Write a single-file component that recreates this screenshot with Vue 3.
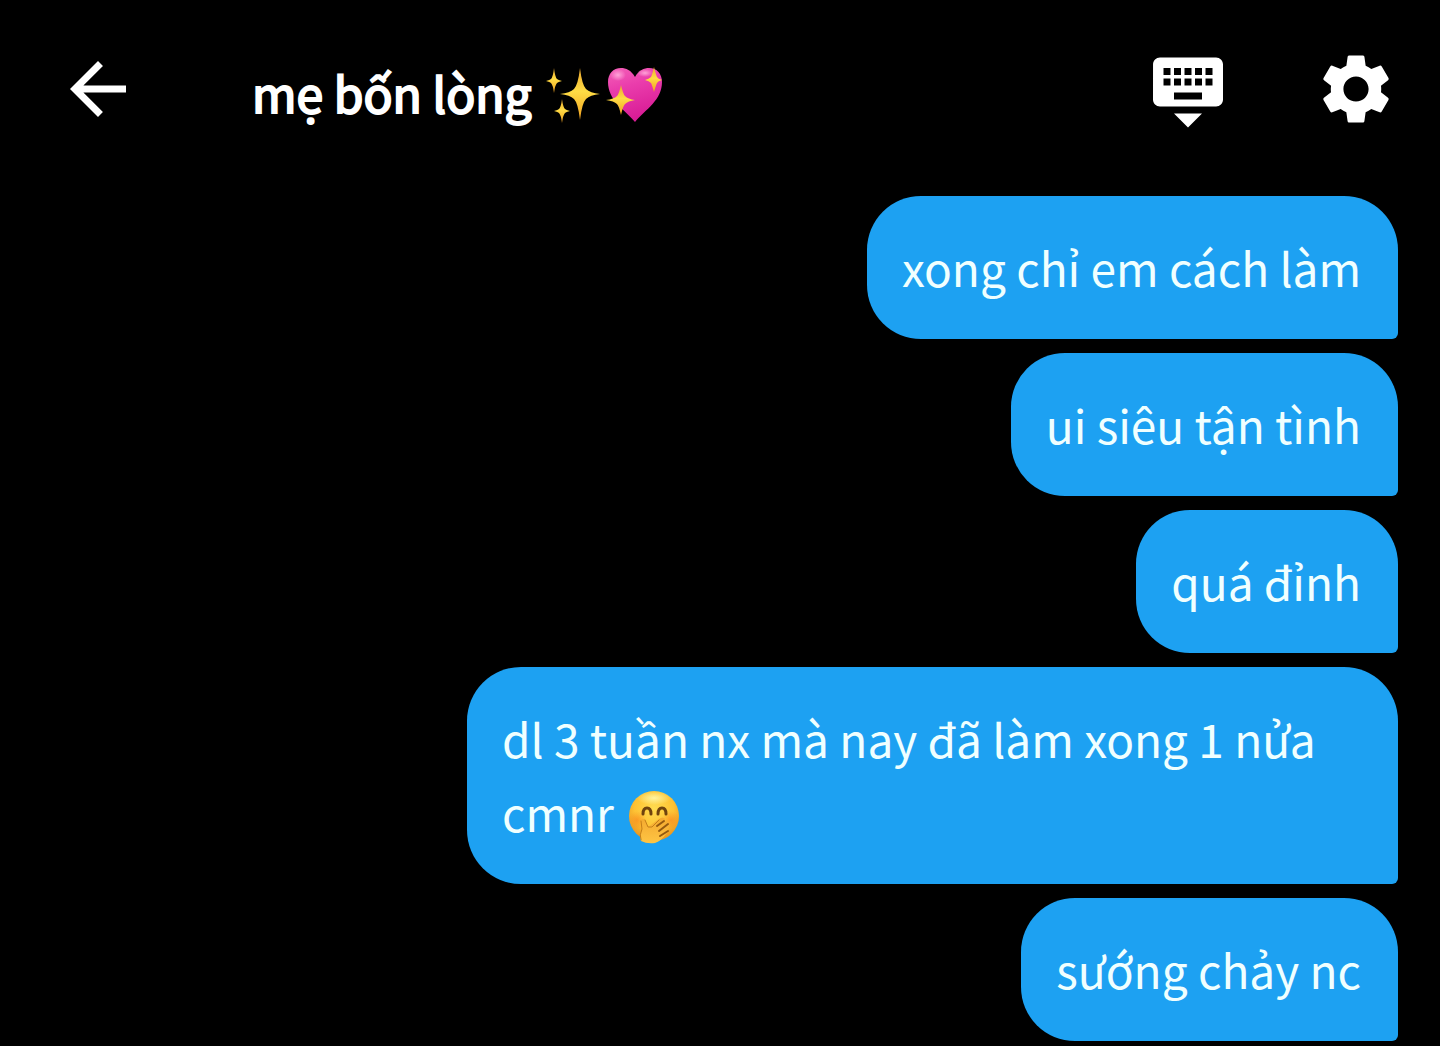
<script setup>
import { ref } from "vue";

const title = ref("mẹ bốn lòng")

const messages = ref([
    { id: 1, text: "xong chỉ em cách làm" },
    { id: 2, text: "ui siêu tận tình" },
    { id: 3, text: "quá đỉnh" },
    { id: 4, text: "dl 3 tuần nx mà nay đã làm xong 1 nửa cmnr", giggle: true },
    { id: 5, text: "sướng chảy nc" }
])
</script>


<template>
    <div class="chat">
        <!-- TOP BAR -->
        <header class="top-bar">
            <button type="button" class="icon-button" aria-label="Back">
                <svg viewBox="0 0 24 24"><path d="M20 11H7.83l5.59-5.59L12 4l-8 8 8 8 1.41-1.41L7.83 13H20v-2z" /></svg>
            </button>
            <h1 class="title">
                <span>{{ title }}</span>
                <!-- sparkles -->
                <svg class="sparkles" viewBox="0 0 56 56" role="img" aria-label="sparkles">
                    <defs>
                        <linearGradient id="gold" x1="0" y1="0" x2="0" y2="1">
                            <stop offset="0" stop-color="#e9a52c" />
                            <stop offset="0.45" stop-color="#ffdc45" />
                            <stop offset="1" stop-color="#f0a01f" />
                        </linearGradient>
                    </defs>
                    <g fill="url(#gold)">
                        <path d="M35 1Q37 18 41 22Q45 26 55 27Q45 28 41 32Q37 36 35 53Q33 36 29 32Q25 28 15 27Q25 26 29 22Q33 18 35 1Z" />
                        <path d="M9 1Q10 10 12 12Q13 13 17 14Q13 15 12 16Q10 18 9 26Q8 18 6 16Q5 15 1 14Q5 13 6 12Q8 10 9 1Z" />
                        <path d="M17 32Q18 40 20 42Q21 43 25 44Q21 45 20 46Q18 48 17 56Q16 48 14 46Q13 45 9 44Q13 43 14 42Q16 40 17 32Z" />
                    </g>
                </svg>
                <!-- sparkling heart -->
                <svg class="heart" viewBox="0 0 60 56" role="img" aria-label="sparkling heart">
                    <defs>
                        <linearGradient id="pink" x1="0" y1="0" x2="0.3" y2="1">
                            <stop offset="0" stop-color="#f461b8" />
                            <stop offset="0.4" stop-color="#ea3dac" />
                            <stop offset="1" stop-color="#d91c96" />
                        </linearGradient>
                        <radialGradient id="shine">
                            <stop offset="0" stop-color="#ffa3d8" />
                            <stop offset="1" stop-color="#ffa3d8" stop-opacity="0" />
                        </radialGradient>
                    </defs>
                    <path fill="url(#pink)" d="M30 10C26 3 21 1 16 1C8 1 3 7 3 15C3 33 19 42 30 55C41 42 57 33 57 15C57 7 52 1 44 1C39 1 34 3 30 10Z" />
                    <ellipse cx="13" cy="8" rx="8" ry="6" fill="url(#shine)" />
                    <ellipse cx="40" cy="6" rx="8" ry="4" fill="url(#shine)" />
                    <g fill="url(#gold)">
                        <path d="M16 18Q18 27 20 29Q23 32 30 33Q23 34 20 37Q18 39 16 48Q14 39 12 37Q9 34 1 33Q9 32 12 29Q14 27 16 18Z" />
                        <path d="M49 0Q51 8 52 10Q53 12 57 13Q53 14 52 16Q51 18 49 25Q47 18 46 16Q44 14 40 13Q44 12 46 10Q47 8 49 0Z" />
                    </g>
                </svg>
            </h1>
            <div class="actions">
                <button type="button" class="icon-button" aria-label="Hide keyboard">
                    <svg viewBox="0 0 24 24"><path d="M20 3H4c-1.100 0-1.990.9-1.990 2L2 15c0 1.100.9 2 2 2h16c1.100 0 2-.9 2-2V5c0-1.100-.9-2-2-2zm-9 3h2v2h-2V6zm0 3h2v2h-2V9zM8 6h2v2H8V6zm0 3h2v2H8V9zm-1 2H5V9h2v2zm0-3H5V6h2v2zm9 7H8v-2h8v2zm0-4h-2V9h2v2zm0-3h-2V6h2v2zm3 3h-2V9h2v2zm0-3h-2V6h2v2zm-7 15l4-4H8l4 4z" /></svg>
                </button>
                <button type="button" class="icon-button" aria-label="Settings">
                    <svg viewBox="0 0 24 24"><path d="M19.140 12.940c.04-.3.06-.61.06-.94 0-.32-.02-.64-.07-.94l2.030-1.580c.18-.14.23-.41.12-.61l-1.920-3.320c-.12-.22-.37-.29-.59-.22l-2.390.96c-.5-.38-1.030-.7-1.620-.94l-.36-2.540c-.04-.24-.24-.41-.48-.41h-3.840c-.24 0-.43.17-.47.41l-.36 2.540c-.59.24-1.130.57-1.620.94l-2.390-.96c-.22-.08-.47 0-.59.22L2.740 8.870c-.12.21-.08.47.12.61l2.030 1.580c-.05.3-.09.63-.09.94s.02.64.07.94l-2.030 1.580c-.18.14-.23.41-.12.61l1.920 3.320c.12.22.37.29.59.22l2.390-.96c.5.38 1.030.7 1.620.94l.36 2.540c.05.24.24.41.48.41h3.840c.24 0 .44-.17.47-.41l.36-2.540c.59-.24 1.130-.56 1.620-.94l2.390.96c.22.08.47 0 .59-.22l1.920-3.320c.12-.22.07-.47-.12-.61l-2.010-1.580zM12 15.600c-1.980 0-3.600-1.620-3.600-3.600s1.620-3.600 3.600-3.600 3.600 1.620 3.600 3.600-1.620 3.600-3.600 3.600z" /></svg>
                </button>
            </div>
        </header>

        <!-- MESSAGES -->
        <main class="messages">
            <p v-for="message in messages" :key="message.id" class="bubble">
                {{ message.text }}
                <svg v-if="message.giggle" class="giggle" viewBox="0 0 54 54" role="img" aria-label="face with hand over mouth">
                    <defs>
                        <radialGradient id="face" cx="0.5" cy="0.35" r="0.65">
                            <stop offset="0" stop-color="#ffdc50" />
                            <stop offset="0.6" stop-color="#fdc234" />
                            <stop offset="1" stop-color="#e8931f" />
                        </radialGradient>
                        <radialGradient id="blush">
                            <stop offset="0" stop-color="#f9821c" stop-opacity="0.6" />
                            <stop offset="1" stop-color="#f9821c" stop-opacity="0" />
                        </radialGradient>
                        <radialGradient id="glow">
                            <stop offset="0" stop-color="#fff4a0" />
                            <stop offset="1" stop-color="#fff4a0" stop-opacity="0" />
                        </radialGradient>
                        <linearGradient id="hand" x1="0" y1="0" x2="0" y2="1">
                            <stop offset="0" stop-color="#f3a92f" />
                            <stop offset="1" stop-color="#ffc544" />
                        </linearGradient>
                    </defs>
                    <circle cx="26" cy="26" r="25" fill="url(#face)" />
                    <ellipse cx="26" cy="8" rx="17" ry="7" fill="url(#glow)" />
                    <circle cx="9" cy="30" r="9" fill="url(#blush)" />
                    <circle cx="43" cy="30" r="9" fill="url(#blush)" />
                    <path d="M15 24Q15 18 19 18Q23 18 23 24M30 24Q30 18 34 18Q38 18 38 24" fill="none" stroke="#6f430e" stroke-width="3" stroke-linecap="round" />
                    <path d="M13 51Q11 45 14 39L13 31Q14 27 17 30L20 37L31 29Q35 26 37 29L36 32Q40 30 41 34Q43 36 40 39Q41 42 38 44Q33 51 27 53Q19 54 13 51Z" fill="url(#hand)" />
                    <path d="M17 30L20 37L24 37L31 30M13 31L14 39Q11 45 13 50" fill="none" stroke="#c47e18" stroke-width="1" stroke-linecap="round" />
                    <path d="M29 36L36 31M31 41L40 34M32 46L40 41" fill="none" stroke="#94590f" stroke-width="2" stroke-linecap="round" />
                </svg>
            </p>
        </main>
    </div>
</template>


<style>
body {
  margin: 0;
  background-color: #000;
}
</style>

<style scoped>
.chat {
  font-family: "Noto Sans CJK SC", "Noto Sans", sans-serif;
  color: #fff;
}

.top-bar {
  display: flex;
  align-items: center;
  padding: 47px 42px 65px 56px;
}

.icon-button {
  flex: none;
  width: 84px;
  height: 84px;
  padding: 0;
  color: inherit;
  background: none;
  border: none;
  cursor: pointer;
}

.icon-button svg {
  display: block;
  width: 84px;
  height: 84px;
  fill: currentColor;
}

.title {
  display: flex;
  flex: 1;
  align-items: center;
  margin: 0 0 0 112px;
  padding-top: 6px;
  font-size: 48px;
  line-height: 74px;
  font-weight: normal;
  -webkit-text-stroke: 2px currentColor;
}

.sparkles,
.heart {
  height: 56px;
  margin-top: 6px;
}

.sparkles {
  width: 56px;
  margin-left: 13px;
}

.heart {
  width: 60px;
  margin-left: 4px;
}

.actions {
  display: flex;
  gap: 84px;
}

.messages {
  display: flex;
  flex-direction: column;
  align-items: flex-end;
  gap: 14px;
  padding: 0 42px 4px;
}

.bubble {
  box-sizing: border-box;
  max-width: 931px;
  margin: 0;
  padding: 34px 37px 35px 35px;
  font-size: 46px;
  line-height: 74px;
  color: #f0ffff;
  background-color: #1da1f2;
  border-radius: 54px 54px 6px 54px;
}

.giggle {
  width: 54px;
  height: 54px;
  margin-left: 4px;
  vertical-align: -12px;
}
</style>
